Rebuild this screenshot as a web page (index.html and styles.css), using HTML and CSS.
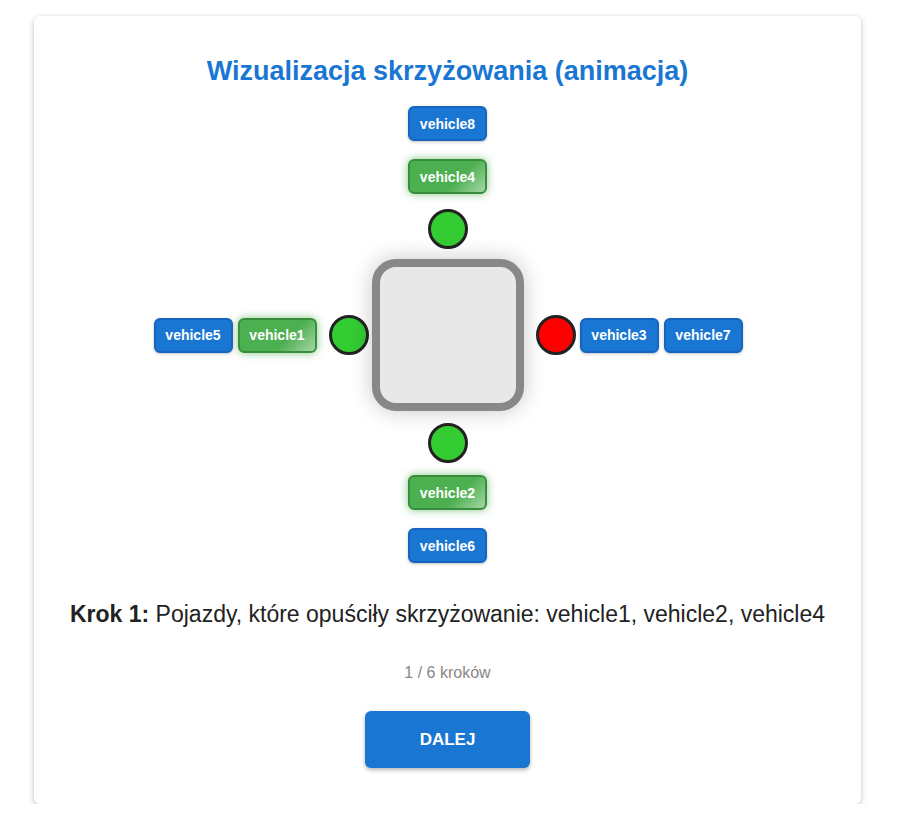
FILE: index.html
```html
<!DOCTYPE html>
<html lang="pl">
<head>
<meta charset="utf-8">
<title>Wizualizacja skrzyżowania</title>
<link rel="stylesheet" href="styles.css">
</head>
<body>
<div class="card">
  <h2 class="title">Wizualizacja skrzyżowania (animacja)</h2>
  <div class="junction">
    <div class="north">
      <div class="veh">vehicle8</div>
      <div class="veh go">vehicle4</div>
      <div class="light green"></div>
    </div>
    <div class="west">
      <div class="veh">vehicle5</div>
      <div class="veh go">vehicle1</div>
      <div class="light green"></div>
    </div>
    <div class="box"></div>
    <div class="east">
      <div class="light red"></div>
      <div class="veh">vehicle3</div>
      <div class="veh">vehicle7</div>
    </div>
    <div class="south">
      <div class="light green"></div>
      <div class="veh go">vehicle2</div>
      <div class="veh">vehicle6</div>
    </div>
  </div>
  <p class="step"><strong>Krok 1:</strong> Pojazdy, które opuściły skrzyżowanie: vehicle1, vehicle2, vehicle4</p>
  <p class="counter">1 / 6 kroków</p>
  <div class="actions"><button class="next">DALEJ</button></div>
</div>
</body>
</html>
```
FILE: styles.css
```css
html, body {
  margin: 0;
  padding: 0;
  background: #ffffff;
  font-family: "Liberation Sans", Arial, sans-serif;
}
body {
  padding: 16px 0 0 34px;
}
.card {
  width: 827px;
  box-sizing: border-box;
  background: #fff;
  border-radius: 6px;
  box-shadow: 0 2px 6px rgba(0,0,0,0.22), 0 0 3px rgba(0,0,0,0.06);
  padding: 40px 0 36px;
  text-align: center;
}
.title {
  margin: 0;
  font-size: 27px;
  line-height: 30px;
  font-weight: bold;
  color: #1976d2;
}
.junction {
  margin-top: 20px;
  display: grid;
  grid-template-columns: 1fr 152px 1fr;
  grid-template-areas:
    ". n ."
    "w c e"
    ". s .";
  align-items: center;
}
.north {
  grid-area: n;
  display: flex;
  flex-direction: column;
  align-items: center;
  margin-bottom: 10px;
}
.north .veh { margin-bottom: 18px; }
.north .veh + .veh { margin-bottom: 15px; }
.south {
  grid-area: s;
  display: flex;
  flex-direction: column;
  align-items: center;
  margin-top: 12px;
}
.south .light { margin-bottom: 12px; }
.south .veh + .veh { margin-top: 18px; }
.west {
  grid-area: w;
  display: flex;
  justify-content: flex-end;
  align-items: center;
  gap: 5px;
  margin-right: 3px;
}
.west .light { margin-left: 7px; }
.east {
  grid-area: e;
  display: flex;
  justify-content: flex-start;
  align-items: center;
  gap: 5px;
  margin-left: 12px;
}
.box {
  grid-area: c;
  width: 152px;
  height: 152px;
  box-sizing: border-box;
  border: 8px solid #888;
  border-radius: 24px;
  background: #e8e8e8;
  box-shadow: 0 0 22px rgba(0,0,0,0.22);
}
.light {
  width: 40px;
  height: 40px;
  box-sizing: border-box;
  border-radius: 50%;
  border: 3px solid #222;
  flex: none;
}
.light.green { background: #33cc33; }
.light.red { background: #ff0000; }
.east .light { margin-right: -1px; }
.veh {
  width: 79px;
  height: 35px;
  box-sizing: border-box;
  display: flex;
  align-items: center;
  justify-content: center;
  background: #1976d2;
  border: 2px solid #1565c0;
  border-radius: 6px;
  color: #fff;
  font-size: 14px;
  font-weight: bold;
  box-shadow: 0 1px 3px rgba(0,0,0,0.25);
  flex: none;
}
.veh.go {
  background: linear-gradient(135deg, #4caf50 0%, #4caf50 62%, #a5d6a7 100%);
  border-color: #388e3c;
  box-shadow: 0 0 8px rgba(76,175,80,0.7);
}
.step {
  margin: 38px 0 0;
  font-size: 23px;
  line-height: 27px;
  color: #222;
}
.step strong { font-weight: bold; }
.counter {
  margin: 35px 0 0;
  font-size: 16px;
  line-height: 19px;
  color: #888;
}
.actions { margin-top: 29px; }
.next {
  width: 165px;
  height: 57px;
  border: none;
  border-radius: 6px;
  background: #1976d2;
  color: #fff;
  font-family: "Liberation Sans", Arial, sans-serif;
  font-size: 17px;
  font-weight: bold;
  box-shadow: 0 2px 4px rgba(0,0,0,0.3);
}
```
